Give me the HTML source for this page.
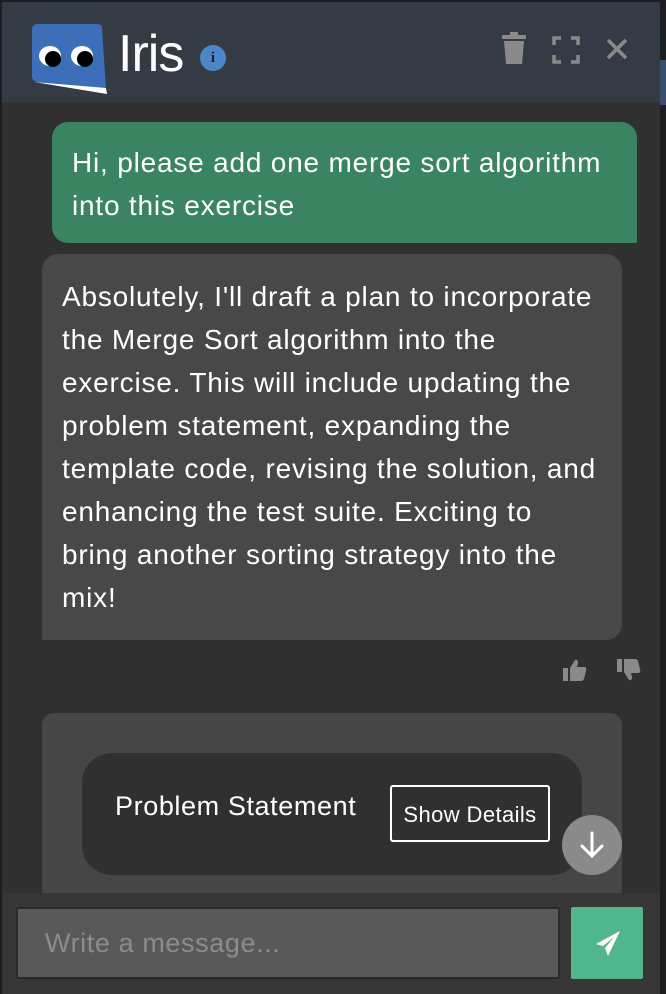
<!DOCTYPE html>
<html><head><style>
*{margin:0;padding:0;box-sizing:border-box}
body{width:666px;height:994px;overflow:hidden;background:#1e1e1e;font-family:"Liberation Sans",sans-serif;position:relative}
.win{position:absolute;left:2px;top:2px;width:658px;height:992px;background:#303030;overflow:hidden}
.hdr{position:absolute;left:0;top:0;width:658px;height:100px;background:#353b45}
.abs{position:absolute}
.txt{color:#fff;font-size:28px;letter-spacing:0.8px;line-height:43px;white-space:nowrap}
</style></head><body>
<div class="abs" style="left:660px;top:60px;width:6px;height:45px;background:#3a4d6b"></div>
<div class="win">
<div class="hdr">
 <svg class="abs" style="left:28px;top:20px" width="82" height="74" viewBox="0 0 82 74">
  <path d="M8 2 Q2 2 2 8 L2 54 Q2 59 7 60 L76 68 L72 6 Q72 2 67 2 Z" fill="#3d6fb8"/>
  <path d="M4 60 L76 66 L77 72 Z" fill="#fff"/>
  <ellipse cx="20" cy="34" rx="11" ry="10" fill="#fff"/><ellipse cx="23" cy="37" rx="8" ry="8" fill="#000"/>
  <ellipse cx="52" cy="34" rx="11" ry="10" fill="#fff"/><ellipse cx="55" cy="37" rx="8" ry="8" fill="#000"/>
 </svg>
 <div class="abs" style="left:116px;top:22px;color:#fff;font-size:52px;letter-spacing:-1px">Iris</div>
 <div class="abs" style="left:198px;top:43px;width:26px;height:26px;border-radius:50%;background:#4a86c8;color:#222;font:bold 15px 'Liberation Serif',serif;text-align:center;line-height:26px">i</div>
 <svg class="abs" style="left:498px;top:30px" width="28" height="34" viewBox="0 0 28 34"><rect x="2" y="3" width="24" height="4" rx="1" fill="#8a8a8a"/><rect x="10" y="0" width="8" height="4" fill="#8a8a8a"/><path d="M4 9 L24 9 L22 32 L6 32 Z" fill="#8a8a8a"/></svg>
 <svg class="abs" style="left:550px;top:34px" width="28" height="28" viewBox="0 0 28 28" fill="none" stroke="#8a8a8a" stroke-width="3.5"><path d="M2 9V2h7M19 2h7v7M26 19v7h-7M9 26H2v-7"/></svg>
 <svg class="abs" style="left:604px;top:36px" width="22" height="22" viewBox="0 0 22 22" stroke="#8a8a8a" stroke-width="3.5"><path d="M2 2L20 20M20 2L2 20"/></svg>
</div>
<div class="abs txt" style="left:50px;top:120px;width:585px;height:121px;background:#3a8461;border-radius:16px 16px 0 16px;padding:19px 20px">Hi, please add one merge sort algorithm<br>into this exercise</div>
<div class="abs txt" style="left:40px;top:252px;width:580px;height:386px;background:#484848;border-radius:16px 16px 16px 0;padding:21px 20px">Absolutely, I'll draft a plan to incorporate<br>the Merge Sort algorithm into the<br>exercise. This will include updating the<br>problem statement, expanding the<br>template code, revising the solution, and<br>enhancing the test suite. Exciting to<br>bring another sorting strategy into the<br>mix!</div>
<svg class="abs" style="left:560px;top:656px" width="26" height="24" viewBox="0 0 26 24" fill="#8a8a8a"><rect x="1" y="10" width="5" height="13"/><path d="M8 10 L13 2 Q16 1 16 5 L15 9 L23 9 Q25 10 24 13 L22 21 Q21 23 19 23 L8 23 Z"/></svg>
<svg class="abs" style="left:614px;top:656px" width="26" height="24" viewBox="0 0 26 24" fill="#8a8a8a"><rect x="1" y="1" width="5" height="13"/><path d="M8 14 L13 22 Q16 23 16 19 L15 15 L23 15 Q25 14 24 11 L22 3 Q21 1 19 1 L8 1 Z"/></svg>
<div class="abs" style="left:40px;top:711px;width:580px;height:200px;background:#464646;border-radius:12px"></div>
<div class="abs" style="left:80px;top:751px;width:500px;height:122px;background:#303030;border-radius:30px"></div>
<div class="abs" style="left:113px;top:789px;color:#fff;font-size:27px;letter-spacing:0.6px">Problem Statement</div>
<div class="abs" style="left:388px;top:783px;width:160px;height:57px;border:2px solid #fff;border-radius:3px;color:#fff;font-size:22px;letter-spacing:0.4px;line-height:55px;text-align:center">Show Details</div>
<div class="abs" style="left:560px;top:813px;width:60px;height:60px;border-radius:50%;background:#8a8a8a"></div>
<svg class="abs" style="left:576px;top:828px" width="28" height="30" viewBox="0 0 28 30" fill="none" stroke="#fff" stroke-width="3" stroke-linecap="round"><path d="M14 3V26M4 16L14 26L24 16"/></svg>
<div class="abs" style="left:0;top:891px;width:658px;height:101px;background:#363636"></div>
<div class="abs" style="left:14px;top:905px;width:544px;height:72px;background:#595959;border:2px solid #2a2a2a;border-radius:3px;color:#8c8c8c;font-size:27px;letter-spacing:0.6px;line-height:68px;padding-left:27px">Write a message...</div>
<div class="abs" style="left:569px;top:905px;width:72px;height:72px;background:#52b68c;border-radius:2px"></div>
<svg class="abs" style="left:592px;top:928px" width="28" height="28" viewBox="0 0 28 28" fill="#fff"><path d="M26 1 L2 14 L9 16 L20 7 L11 18 L14 26 Z"/></svg>
</div>
</body></html>
